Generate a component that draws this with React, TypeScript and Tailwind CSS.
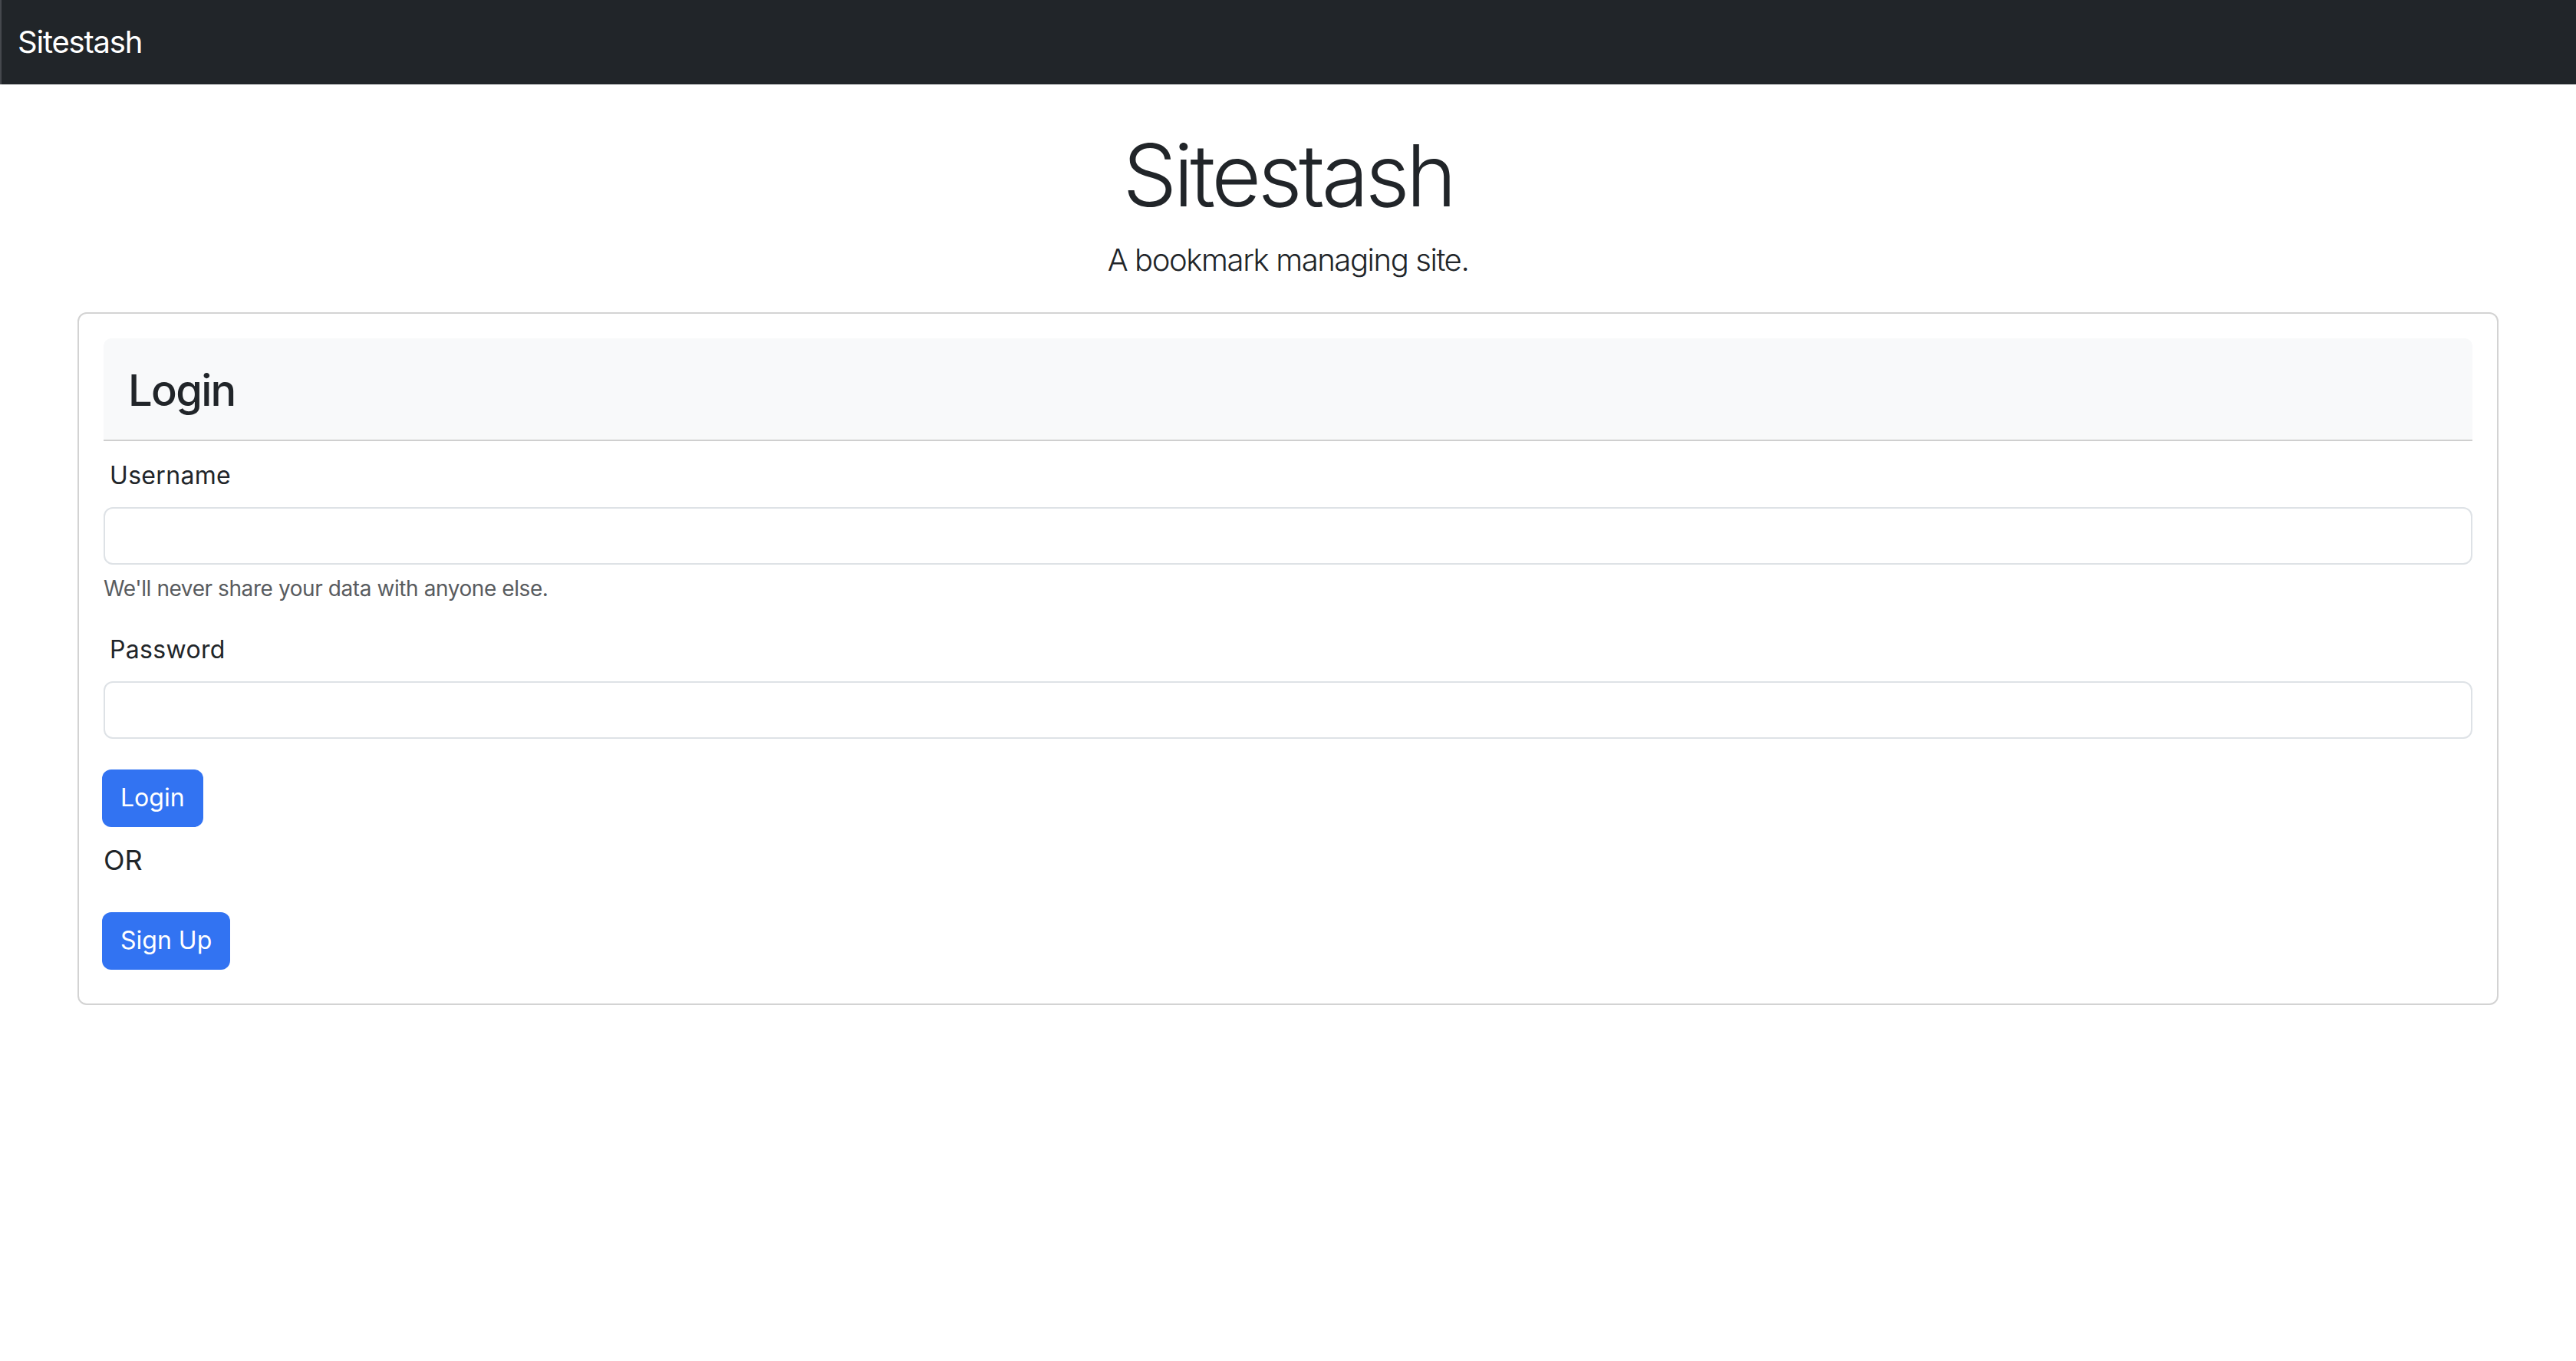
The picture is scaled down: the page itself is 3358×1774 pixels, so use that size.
export default function App() {
  return (
    <div className="min-h-screen bg-white font-['Inter',sans-serif] text-[#212529]">
      {/* Top bar */}
      <nav className="flex h-[110px] items-center border-l-2 border-[#45484d] bg-[#212529] pl-[21px]">
        <span className="text-[40px] leading-[1.5] tracking-[-0.03em] text-white">Sitestash</span>
      </nav>

      <header className="pt-[51px] text-center">
        <h1 className="text-[112px] font-light leading-[1.2] tracking-[-0.04em]">Sitestash</h1>
        <p className="mt-[14px] text-[40px] font-light leading-[1.5] tracking-[-0.035em]">A bookmark managing site.</p>
      </header>

      <div className="mt-[38px] px-[101px]">
        <div className="rounded-[12px] border-2 border-[#d3d3d3] p-[32px] pb-[44px]">
          <div className="rounded-t-[10px] border-b-2 border-[#cfcfcf] bg-[#f8f9fa] px-[32px] pt-[35px] pb-[29px]">
            <h3 className="text-[56px] font-medium leading-[1.2] tracking-[-0.03em]">Login</h3>
          </div>

          <form onSubmit={(e) => e.preventDefault()}>
            <label htmlFor="username" className="mt-[21px] ml-[8px] block text-[32px] leading-[48px] tracking-[0.01em]">
              Username
            </label>
            <input
              id="username"
              type="text"
              className="mt-[17px] block h-[75px] w-full rounded-[12px] border-2 border-[#dee2e6] bg-white px-[24px] text-[32px] outline-none"
            />
            <p className="mt-[10px] text-[28px] leading-[42px] tracking-[-0.015em] text-[#595c5f]">
              We'll never share your data with anyone else.
            </p>

            <label htmlFor="password" className="mt-[35px] ml-[8px] block text-[32px] leading-[48px] tracking-[0.01em]">
              Password
            </label>
            <input
              id="password"
              type="password"
              className="mt-[17px] block h-[75px] w-full rounded-[12px] border-2 border-[#dee2e6] bg-white px-[24px] text-[32px] outline-none"
            />

            <button
              type="submit"
              className="-ml-[2px] mt-[40px] block h-[75px] w-fit rounded-[12px] bg-[#3273f2] px-[24px] text-[32px] leading-[48px] text-white"
            >
              Login
            </button>
            <p className="mt-[16px] text-[36px] leading-[54px]">OR</p>
            <button
              type="button"
              className="-ml-[2px] mt-[41px] block h-[75px] w-fit rounded-[12px] bg-[#3273f2] px-[24px] text-[32px] leading-[48px] text-white"
            >
              Sign Up
            </button>
          </form>
        </div>
      </div>
    </div>
  )
}
